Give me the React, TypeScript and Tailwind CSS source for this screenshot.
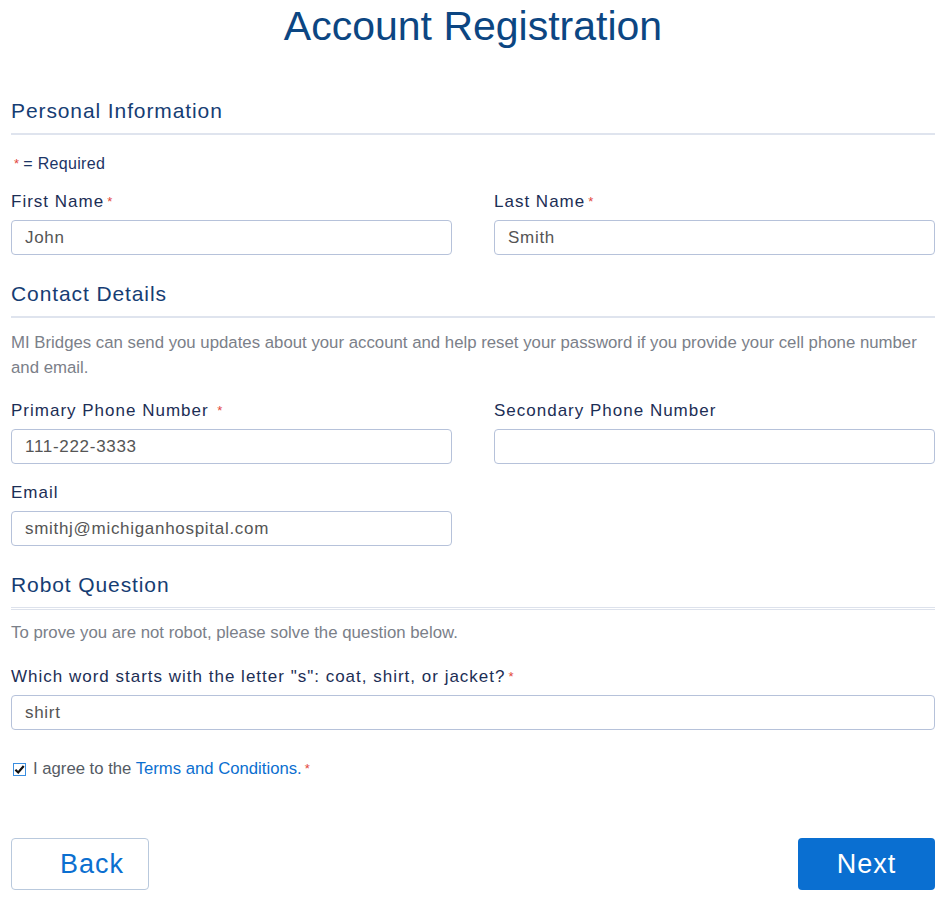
import React from 'react';

const font = { fontFamily: '"Liberation Sans", Arial, sans-serif' };

const Req = () => <span className="text-[#e2463b] text-[13px] align-top ml-[3px]">*</span>;

const Heading = ({ children, double }: { children: React.ReactNode; double?: boolean }) => (
  <h2
    className={
      'text-[21px] leading-[28px] tracking-[0.9px] text-[#163d73] pb-[8px] ' +
      (double ? 'border-b-[3px] border-double border-[#dde2ec]' : 'border-b-2 border-[#dfe4ee]')
    }
  >
    {children}
  </h2>
);

const Label = ({ children, req }: { children: React.ReactNode; req?: boolean }) => (
  <label className="block text-[17px] leading-[20px] tracking-[1px] text-[#1c2e55]">
    {children}
    {req && <Req />}
  </label>
);

const Input = ({ value }: { value?: string }) => (
  <input
    readOnly
    value={value ?? ''}
    className="mt-[8px] block w-full h-[35px] rounded-[4px] border border-[#b6c2da] bg-white px-[13px] text-[17px] tracking-[0.7px] text-[#555] outline-none"
    style={font}
  />
);

export default function App() {
  return (
    <div className="min-h-screen bg-white pl-[11px] pr-[14px]" style={font}>
      <h1 className="text-center text-[41px] leading-[52px] text-[#0c4682]">Account Registration</h1>

      <div className="mt-[45px]">
        <Heading>Personal Information</Heading>
      </div>
      <p className="mt-[19px] text-[16px] leading-[20px] tracking-[0.3px] text-[#1c3566]">
        <span className="text-[#e2463b] text-[13px] align-top ml-[3px] mr-[4px]">*</span>= Required
      </p>

      <div className="mt-[18px] grid grid-cols-2 gap-x-[42px]">
        <div>
          <Label req>First Name</Label>
          <Input value="John" />
        </div>
        <div>
          <Label req>Last Name</Label>
          <Input value="Smith" />
        </div>
      </div>

      <div className="mt-[25px]">
        <Heading>Contact Details</Heading>
      </div>
      <p className="mt-[12px] text-[16.8px] leading-[25px] text-[#7b8089]">
        MI Bridges can send you updates about your account and help reset your password if you provide your cell phone number and email.
      </p>

      <div className="mt-[21px] grid grid-cols-2 gap-x-[42px] gap-y-[19px]">
        <div>
          <Label>
            Primary Phone Number <span className="text-[#e2463b] text-[13px] align-top ml-[3px]">*</span>
          </Label>
          <Input value="111-222-3333" />
        </div>
        <div>
          <Label>Secondary Phone Number</Label>
          <Input />
        </div>
        <div>
          <Label>Email</Label>
          <Input value="smithj@michiganhospital.com" />
        </div>
      </div>

      <div className="mt-[25px]">
        <Heading double>Robot Question</Heading>
      </div>
      <p className="mt-[10px] text-[16.8px] leading-[25px] text-[#7b8089]">
        To prove you are not robot, please solve the question below.
      </p>

      <div className="mt-[22px]">
        <Label req>Which word starts with the letter "s": coat, shirt, or jacket?</Label>
        <Input value="shirt" />
      </div>

      <div className="mt-[29px] flex items-center text-[16.7px] leading-[20px] text-[#555b64]">
        <span className="ml-[2px] mr-[7px] flex h-[13px] w-[13px] items-center justify-center border border-[#3a8ee0] bg-white">
          <svg viewBox="0 0 12 12" className="h-[11px] w-[11px]">
            <path d="M1.5 6.2 L4.6 9.2 L10.6 2.2" fill="none" stroke="#111" strokeWidth="2.4" />
          </svg>
        </span>
        <span>
          I agree to the <span className="text-[#0b6fd0]">Terms and Conditions.</span>
          <Req />
        </span>
      </div>

      <div className="mt-[59px] flex justify-between">
        <button className="h-[52px] w-[138px] rounded-[4px] border border-[#b9c9dd] bg-white pl-[48px] text-left text-[27px] tracking-[1px] text-[#0b6fd0]">
          Back
        </button>
        <button className="h-[52px] w-[137px] rounded-[4px] bg-[#0a6fd1] text-center text-[27px] tracking-[1px] text-white">
          Next
        </button>
      </div>
    </div>
  );
}
